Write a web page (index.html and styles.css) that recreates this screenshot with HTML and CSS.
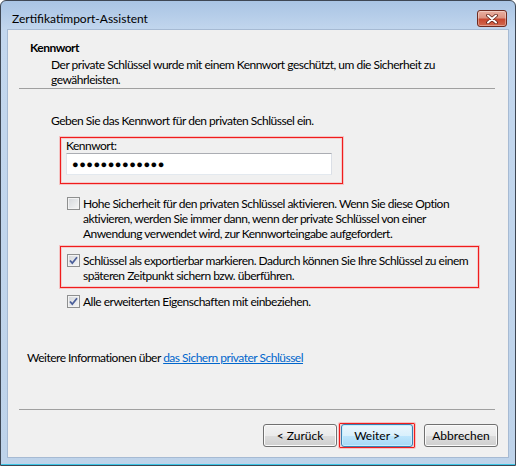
FILE: index.html
```html
<!DOCTYPE html>
<html lang="de">
<head>
    <meta charset="UTF-8">
    <title>Zertifikatimport-Assistent</title>
    <link rel="stylesheet" href="styles.css">
</head>
<body>
    <!-- Fensterrahmen -->
    <div class="window">
        <div class="titlebar">
            <span class="title">Zertifikatimport-Assistent</span>
            <button class="close" type="button">
                <svg width="12" height="10" viewBox="0 0 12 10">
                    <path d="M2 1.5 L10 8.5 M10 1.5 L2 8.5" stroke="#5b1f16" stroke-width="3.6" stroke-linecap="round"/>
                    <path d="M2 1.5 L10 8.5 M10 1.5 L2 8.5" stroke="#fff" stroke-width="2" stroke-linecap="round"/>
                </svg>
            </button>
        </div>
        <div class="client">
            <!-- Kopfbereich -->
            <div class="header">
                <div class="heading">Kennwort</div>
                <p class="subtitle">Der private Schlüssel wurde mit einem Kennwort geschützt, um die Sicherheit zu<br>gewährleisten.</p>
            </div>
            <div class="rule"></div>
            <div class="content">
                <p class="intro">Geben Sie das Kennwort für den privaten Schlüssel ein.</p>
                <div class="mark pwd">
                    <div class="label">Kennwort:</div>
                    <div class="field"><span class="dots">●●●●●●●●●●●●●</span></div>
                </div>
                <div class="option first">
                    <span class="box"></span>
                    <span class="text">Hohe Sicherheit für den privaten Schlüssel aktivieren. Wenn Sie diese Option<br>aktivieren, werden Sie immer dann, wenn der private Schlüssel von einer<br>Anwendung verwendet wird, zur Kennworteingabe aufgefordert.</span>
                </div>
                <div class="mark export">
                    <div class="option">
                        <span class="box checked"><svg width="11" height="11" viewBox="0 0 11 11"><path d="M2 5.5 L4.3 8.2 L9 2.3" fill="none" stroke="#4b5f9a" stroke-width="1.8"/></svg></span>
                        <span class="text">Schlüssel als exportierbar markieren. Dadurch können Sie Ihre Schlüssel zu einem<br>späteren Zeitpunkt sichern bzw. überführen.</span>
                    </div>
                </div>
                <div class="option last">
                    <span class="box checked"><svg width="11" height="11" viewBox="0 0 11 11"><path d="M2 5.5 L4.3 8.2 L9 2.3" fill="none" stroke="#4b5f9a" stroke-width="1.8"/></svg></span>
                    <span class="text">Alle erweiterten Eigenschaften mit einbeziehen.</span>
                </div>
                <p class="more">Weitere Informationen über <a href="javascript:;">das Sichern privater Schlüssel</a></p>
            </div>
            <div class="rule"></div>
            <!-- Schaltflächen -->
            <div class="buttons">
                <button class="btn" type="button">&lt; Zurück</button>
                <span class="mark next"><button class="btn default" type="button">Weiter &gt;</button></span>
                <button class="btn cancel" type="button">Abbrechen</button>
            </div>
        </div>
    </div>
</body>
</html>
```

FILE: styles.css
```css
*{
    margin: 0;
    padding: 0;
    box-sizing: border-box;
}
body{
    background: #fff;
    font-family: Lato, "Liberation Sans", sans-serif;
    font-size: 12px;
    line-height: 15px;
    letter-spacing: -0.5px;
    color: #000;
}
.window{
    width: 516px;
    height: 466px;
    border: 1px solid #3e4754;
    border-radius: 6px 6px 0 0;
    padding: 0 6px 7px;
    background: linear-gradient(#a9c4e4 0, #c3d7ee 30px, #bed3ea 100%);
    box-shadow: inset 0 -1px #3cc6e6;
    display: flex;
    flex-direction: column;
}
.titlebar{
    height: 28px;
    display: flex;
    align-items: flex-start;
    justify-content: space-between;
}
.title{
    margin: 10px 0 0 5px;
    letter-spacing: 0;
}
.close{
    width: 30px;
    height: 17px;
    margin: 9px 2px 0 0;
    border: 1px solid #6f2b20;
    border-radius: 3px;
    background: linear-gradient(#eab0a1 0, #dc9382 45%, #c8472f 55%, #d1694f 100%);
    box-shadow: inset 0 0 0 1px rgba(255,255,255,.35);
    display: flex;
    align-items: center;
    justify-content: center;
}
.client{
    flex: 1;
    border: 1px solid #a6bad3;
    background: #f0f0f0;
    display: flex;
    flex-direction: column;
}
.header{
    padding: 10px 0 0 22px;
}
.heading{
    font-weight: bold;
}
.subtitle{
    margin-top: 2px;
    padding-left: 21px;
}
.rule{
    height: 1px;
    background: #a0a0a0;
    margin: 1px 13px 0 11px;
}
.content{
    flex: 1;
    padding-left: 43px;
}
.intro{
    margin-top: 24px;
}
.mark{
    border: 1px solid #f01c1c;
    box-shadow: 0 0 0 1px rgba(255,60,60,.25), inset 0 0 0 1px rgba(255,60,60,.2);
}
.pwd{
    width: 283px;
    margin: 9px 0 0 9px;
    padding: 0 0 8px 5px;
}
.field{
    width: 266px;
    height: 22px;
    background: #fff;
    border: 1px solid #e3e9ef;
    border-top-color: #abadb3;
    border-left-color: #e2e3ea;
    border-right-color: #dbdfe6;
    padding: 0 5px;
    display: flex;
    align-items: center;
}
.dots{
    font-family: "Liberation Sans", sans-serif;
    font-size: 11px;
    letter-spacing: .5px;
}
.option{
    display: flex;
    align-items: flex-start;
    margin-left: 16px;
}
.option.first{
    margin-top: 12px;
}
.option.last{
    margin-top: 6px;
}
.box{
    width: 13px;
    height: 13px;
    margin: 1px 3px 0 0;
    flex: none;
    border: 1px solid #8e8f8f;
    background: linear-gradient(135deg, #d3d6da, #f6f6f6);
    box-shadow: inset 0 0 0 1px #f3f3f3;
    display: flex;
    align-items: center;
    justify-content: center;
}
.export{
    width: 419px;
    margin: 5px 0 0 9px;
    padding: 6px 0 4px;
}
.export .option{
    margin-left: 6px;
}
.more{
    margin: 41px 0 0 -24px;
}
.more a{
    color: #0066cc;
}
.buttons{
    display: flex;
    justify-content: flex-end;
    align-items: center;
    padding: 13px 10px 9px 0;
}
.btn{
    width: 74px;
    height: 23px;
    font: inherit;
    color: #000;
    border: 1px solid #707070;
    border-radius: 3px;
    background: linear-gradient(#f2f2f2 0, #ebebeb 50%, #dddddd 50%, #cfcfcf 100%);
    box-shadow: inset 0 0 0 1px #fbfbfb;
}
.next{
    margin-left: 2px;
    padding: 0 1px;
    border-radius: 1px;
}
.btn.default{
    display: block;
    width: 72px;
    border-color: #3c7fb1;
    background: linear-gradient(#eaf6fd 0, #d9f0fc 50%, #bee6fd 50%, #a7d9f5 100%);
    box-shadow: inset 0 0 0 1px #c5f0ff;
}
.cancel{
    margin-left: 9px;
}
```
